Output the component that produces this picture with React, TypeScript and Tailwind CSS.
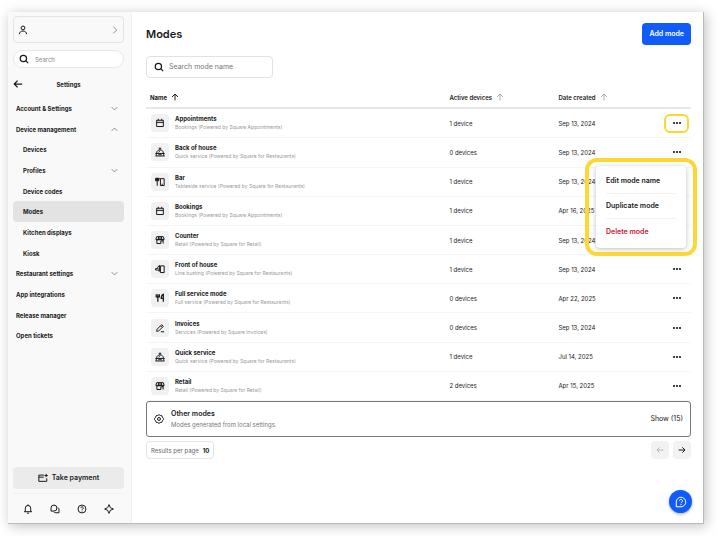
import React from "react";

type IconName =
  | "calendar"
  | "cloche"
  | "tableside"
  | "store"
  | "linebusting"
  | "cutlery"
  | "pen"
  | "user"
  | "search"
  | "left"
  | "right"
  | "up"
  | "chevronDown"
  | "chevronUp"
  | "chevronRight"
  | "payment"
  | "bell"
  | "chat"
  | "help"
  | "spark"
  | "gear"
  | "bubble";

interface Mode {
  name: string;
  detail: string;
  icon: IconName;
  devices: string;
  created: string;
}

interface NavItem {
  label: string;
  child?: boolean;
  active?: boolean;
  chevron?: IconName;
}

const shapes: Record<IconName, React.ReactNode> = {
  calendar: <path d="M4 5.500h16v15H4zM4 10.500h16M8 2v4M16 2v4" />,
  cloche: (
    <>
      <path d="M12 3v4M9 3h6M4 14.500c0-10 16-10 16 0M9 13c.3-1.500 1-2.300 2.500-2.800M1 15.500h22" />
      <path d="M3 16v5M21 16v5M1 21.500h22M8 18.500h8" />
    </>
  ),
  tableside: (
    <>
      <path d="M1.500 3h7.500v6H1.500zM5.300 3v18" fill="currentColor" />
      <path d="M13 4h9v16.500h-9zM10 4h3M16 17.500h3" />
    </>
  ),
  store: (
    <>
      <path d="M4 4h16l2 6.500H2zM8.500 4v7M15.500 4v7M12 4v7" />
      <path d="M4.500 11v9.500h9.500V14h5.500M19.500 11v9.500M2.500 11.500h19" />
    </>
  ),
  linebusting: (
    <>
      <path d="M13 4.500h9v16h-9z" />
      <path d="M10.500 3L6 8.500V11H1.500v3.500H6l4.500 3zM10 9v5" />
    </>
  ),
  cutlery: (
    <>
      <path d="M3 3v6.500h7.500V3M6.800 3v18" strokeWidth="3" />
      <path d="M20 21V3.500c-3 1-5 4-5 9.500h5" strokeWidth="3" />
    </>
  ),
  pen: <path d="M4 20l1-5L16 4l4 4L9 19zM13.500 7l3.500 3.500M14 21h8" />,
  user: (
    <>
      <circle cx="12" cy="7" r="4.500" />
      <path d="M3.500 22c0-5 3.500-7.500 8.500-7.500s8.500 2.500 8.500 7.500" />
    </>
  ),
  search: (
    <>
      <circle cx="10.500" cy="10.500" r="7.500" />
      <path d="M16 16l6 6" />
    </>
  ),
  left: <path d="M22 12H3M11 4l-8 8 8 8" />,
  right: <path d="M2 12h19M13 4l8 8-8 8" />,
  up: <path d="M12 22V3M3 12l9-9 9 9" />,
  chevronDown: <path d="M2 7l10 10L22 7" />,
  chevronUp: <path d="M2 17L12 7l10 10" />,
  chevronRight: <path d="M7 2l10 10L7 22" />,
  payment: <path d="M14 5H2v15h19v-7M2 10h12M19.500 2v8M15.500 6h8" />,
  bell: (
    <path d="M2.500 18.500h19M5.500 18.500V10a6.500 6.500 0 0 1 13 0v8.500M12 1v2.500M9.500 22h5" />
  ),
  chat: (
    <>
      <path d="M2.500 17V9.500a7 7 0 0 1 14 0 7 7 0 0 1-7 7.500z" />
      <path d="M19 8.500c1.800 1.200 2.500 3 2.500 5V21H14c-2 0-3.800-.8-5-2" />
    </>
  ),
  help: (
    <>
      <circle cx="12" cy="12" r="9.500" />
      <path d="M9 9.800a3 3 0 1 1 4.500 2.600c-1 .6-1.500 1-1.500 2M12 16v2" />
    </>
  ),
  spark: (
    <path d="M12 1.500l3.200 7.300 7.300 3.200-7.300 3.200L12 22.500l-3.200-7.300L1.500 12l7.300-3.200z" />
  ),
  gear: (
    <>
      <path d="M12 1.500l3 2 3.800.500 1.200 3.500 2.500 3v3L20 16.500 18.800 20l-3.800.500-3 2-3-2-3.800-.500L4 16.500l-2.500-3v-3L4 7.500 5.200 4 9 3.500z" />
      <circle cx="12" cy="12" r="3.500" />
    </>
  ),
  bubble: (
    <>
      <path d="M2.500 21.500V12A9.500 9.500 0 1 1 12 21.500z" />
      <path d="M9 9.800a3 3 0 1 1 4.500 2.600c-1 .6-1.500 1-1.500 2M12 16v2" />
    </>
  ),
};

const Icon: React.FC<{ name: IconName; className?: string; stroke?: number }> = ({
  name,
  className = "size-2.5",
  stroke = 2.4,
}) => (
  <svg
    viewBox="0 0 24 24"
    fill="none"
    stroke="currentColor"
    strokeWidth={stroke}
    className={`shrink-0 ${className}`}
    aria-hidden="true"
  >
    {shapes[name]}
  </svg>
);

const navItems: NavItem[] = [
  { label: "Account & Settings", chevron: "chevronDown" },
  { label: "Device management", chevron: "chevronUp" },
  { label: "Devices", child: true },
  { label: "Profiles", child: true, chevron: "chevronDown" },
  { label: "Device codes", child: true },
  { label: "Modes", child: true, active: true },
  { label: "Kitchen displays", child: true },
  { label: "Kiosk", child: true },
  { label: "Restaurant settings", chevron: "chevronDown" },
  { label: "App integrations" },
  { label: "Release manager" },
  { label: "Open tickets" },
];

const modes: Mode[] = [
  { name: "Appointments", detail: "Bookings (Powered by Square Appointments)", icon: "calendar", devices: "1 device", created: "Sep 13, 2024" },
  { name: "Back of house", detail: "Quick service (Powered by Square for Restaurants)", icon: "cloche", devices: "0 devices", created: "Sep 13, 2024" },
  { name: "Bar", detail: "Tableside service (Powered by Square for Restaurants)", icon: "tableside", devices: "1 device", created: "Sep 13, 2024" },
  { name: "Bookings", detail: "Bookings (Powered by Square Appointments)", icon: "calendar", devices: "1 device", created: "Apr 16, 2025" },
  { name: "Counter", detail: "Retail (Powered by Square for Retail)", icon: "store", devices: "1 device", created: "Sep 13, 2024" },
  { name: "Front of house", detail: "Line busting (Powered by Square for Restaurants)", icon: "linebusting", devices: "1 device", created: "Sep 13, 2024" },
  { name: "Full service mode", detail: "Full service (Powered by Square for Restaurants)", icon: "cutlery", devices: "0 devices", created: "Apr 22, 2025" },
  { name: "Invoices", detail: "Services (Powered by Square Invoices)", icon: "pen", devices: "0 devices", created: "Sep 13, 2024" },
  { name: "Quick service", detail: "Quick service (Powered by Square for Restaurants)", icon: "cloche", devices: "1 device", created: "Jul 14, 2025" },
  { name: "Retail", detail: "Retail (Powered by Square for Retail)", icon: "store", devices: "2 devices", created: "Apr 15, 2025" },
];

const Sidebar: React.FC = () => (
  <aside className="flex w-[124px] shrink-0 flex-col border-r border-[#f0f0f0] bg-[#f9f9f9] pl-[5px] pr-[7px] pt-1">
    <button
      aria-label="Account"
      className="flex h-[27px] items-center justify-between rounded border border-[#e4e4e4] px-1"
    >
      <Icon name="user" />
      <Icon name="chevronRight" className="size-2 text-[#777]" />
    </button>
    <label className="mt-[7px] flex h-[18px] items-center gap-1.5 rounded-full border border-[#e8e8e8] bg-white px-[5px]">
      <Icon name="search" stroke={3} />
      <input
        aria-label="Search"
        placeholder="Search"
        className="w-full min-w-0 text-[6px] outline-none placeholder:text-[#888]"
      />
    </label>
    <div className="relative mt-2 flex h-4 items-center justify-center">
      <button aria-label="Back" className="absolute left-0">
        <Icon name="left" stroke={3} />
      </button>
      <h2 className="text-[6px] font-bold">Settings</h2>
    </div>
    <nav className="mt-1.5 flex h-[248px] flex-col">
      {navItems.map((item) => (
        <a
          key={item.label}
          href="#"
          className={`flex flex-1 items-center justify-between rounded-sm pr-1.5 text-[6px] font-bold ${
            item.child ? "pl-2.5" : "pl-[3px]"
          } ${item.active ? "bg-[#e3e3e3]" : ""}`}
        >
          {item.label}
          {item.chevron && (
            <Icon name={item.chevron} className="size-[7px] text-[#666]" />
          )}
        </a>
      ))}
    </nav>
    <div className="mt-auto">
      <button className="flex h-[22px] w-full items-center justify-center gap-1 rounded-sm bg-[#ebebeb] text-[7px] font-semibold">
        <Icon name="payment" />
        Take payment
      </button>
      <div className="mt-1 flex h-[30px] items-center justify-around border-t border-[#f2f2f2] px-0.5">
        <button aria-label="Notifications">
          <Icon name="bell" />
        </button>
        <button aria-label="Messages">
          <Icon name="chat" />
        </button>
        <button aria-label="Help">
          <Icon name="help" />
        </button>
        <button aria-label="Assistant">
          <Icon name="spark" />
        </button>
      </div>
    </div>
  </aside>
);

const RowMenu: React.FC = () => (
  <div className="absolute -right-1.5 top-[49px] z-10 w-28 rounded-xl border-4 border-[#fdd835] px-[7px] py-1">
    <div className="flex flex-col divide-y divide-[#f2f2f2] rounded-sm bg-white px-2.5 py-[3px] text-[7px] font-semibold shadow-[0_1px_5px_rgba(0,0,0,0.25)]">
      <button className="h-[25px] text-left">Edit mode name</button>
      <button className="h-[25px] text-left">Duplicate mode</button>
      <button className="h-[26px] text-left text-[#cf1736]">Delete mode</button>
    </div>
  </div>
);

const ModeRow: React.FC<{ mode: Mode; open: boolean }> = ({ mode, open }) => (
  <tr className="border-b border-[#f5f5f5]">
    <td className="pl-[5px]">
      <div className="flex items-center gap-1.5">
        <span className="flex size-[18px] items-center justify-center rounded-sm bg-[#f1f1f1]">
          <Icon name={mode.icon} />
        </span>
        <div>
          <p className="text-[6px] font-bold leading-[9px]">{mode.name}</p>
          <p className="text-[5px] leading-[9px] text-[#999]">{mode.detail}</p>
        </div>
      </div>
    </td>
    <td className="pl-px">{mode.devices}</td>
    <td className="pl-px">{mode.created}</td>
    <td className="relative">
      <button
        aria-label={`Actions for ${mode.name}`}
        className={`ml-auto mr-0.5 flex h-[19px] w-[25px] items-center justify-center gap-px rounded-md ${
          open ? "border-2 border-[#fdd835]" : ""
        }`}
      >
        <span className="size-0.5 rounded-full bg-black" />
        <span className="size-0.5 rounded-full bg-black" />
        <span className="size-0.5 rounded-full bg-black" />
      </button>
      {open && <RowMenu />}
    </td>
  </tr>
);

const App: React.FC = () => {
  return (
    <div className="flex h-screen bg-white pb-3 pl-2 pr-4 pt-3 font-['Inter','Liberation_Sans',sans-serif] text-[#1a1a1a]">
      <div className="flex min-w-0 flex-1 border-b border-r border-[#bbb] bg-white shadow-[2px_2px_12px_rgba(0,0,0,0.25)]">
        <Sidebar />
        <main className="relative min-w-0 flex-1 pl-3.5 pr-3 pt-[11px]">
          <div className="flex items-center justify-between">
            <h1 className="text-[11px] font-semibold">Modes</h1>
            <button className="h-[22px] rounded-sm bg-[#105cfb] px-[7px] text-[7px] font-semibold text-white">
              Add mode
            </button>
          </div>
          <label className="mt-[11px] flex h-[22px] w-[127px] items-center gap-[5px] rounded-sm border border-[#e2e2e2] px-[7px]">
            <Icon name="search" stroke={3} />
            <input
              aria-label="Search mode name"
              placeholder="Search mode name"
              className="w-full min-w-0 text-[7px] outline-none placeholder:text-[#777]"
            />
          </label>
          <table className="mt-[9px] h-[314px] w-full table-fixed border-collapse text-[6px]">
            <thead>
              <tr className="h-[21px] border-b-2 border-[#e8e8e8] text-left">
                <th className="w-[55.5%] pl-1 font-bold">
                  <span className="flex items-center gap-1">
                    Name <Icon name="up" className="size-2" stroke={3} />
                  </span>
                </th>
                <th className="w-[20%] pl-px font-semibold">
                  <span className="flex items-center gap-1">
                    Active devices
                    <Icon name="up" className="size-2 text-[#999]" />
                  </span>
                </th>
                <th className="pl-px font-semibold">
                  <span className="flex items-center gap-1">
                    Date created
                    <Icon name="up" className="size-2 text-[#999]" />
                  </span>
                </th>
                <th className="w-[8%]" aria-label="Actions" />
              </tr>
            </thead>
            <tbody>
              {modes.map((mode, i) => (
                <ModeRow key={mode.name} mode={mode} open={i === 0} />
              ))}
            </tbody>
          </table>
          <section className="flex h-9 items-center rounded-[3px] border border-[#777] px-[7px]">
            <Icon name="gear" />
            <div className="ml-[7px] flex-1">
              <h3 className="text-[7px] font-semibold leading-[11px]">
                Other modes
              </h3>
              <p className="text-[6px] leading-[11px] text-[#777]">
                Modes generated from local settings.
              </p>
            </div>
            <button className="text-[7px]">Show (15)</button>
          </section>
          <div className="mt-1 flex items-center justify-between">
            <button className="flex h-[18px] items-center gap-1 rounded-sm border border-[#e4e4e4] px-1 text-[6px] text-[#666]">
              Results per page
              <span className="font-bold text-[#1a1a1a]">10</span>
            </button>
            <div className="flex gap-1">
              <button
                aria-label="Previous page"
                className="flex size-[18px] items-center justify-center rounded-sm bg-[#f2f2f2] text-[#aaa]"
              >
                <Icon name="left" className="size-2" />
              </button>
              <button
                aria-label="Next page"
                className="flex size-[18px] items-center justify-center rounded-sm bg-[#f2f2f2]"
              >
                <Icon name="right" className="size-2" stroke={3} />
              </button>
            </div>
          </div>
          <button
            aria-label="Support"
            className="absolute bottom-2.5 right-[11px] flex size-[23px] items-center justify-center rounded-full bg-[#105cfb] text-white shadow-[0_1px_3px_rgba(0,0,0,0.35)]"
          >
            <Icon name="bubble" className="size-3" stroke={2} />
          </button>
        </main>
      </div>
    </div>
  );
};

export default App;
